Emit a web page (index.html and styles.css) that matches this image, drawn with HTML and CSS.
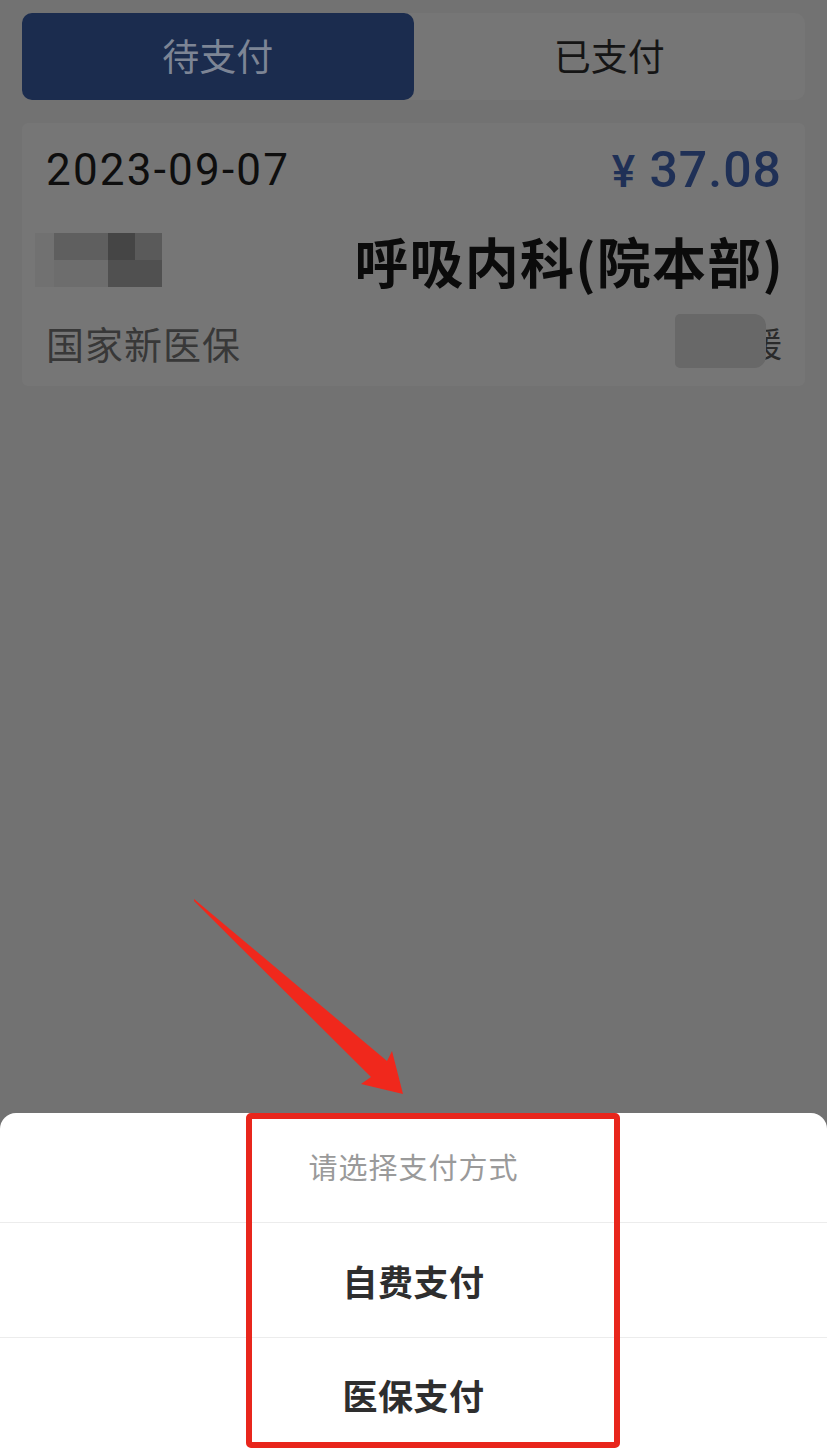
FILE: index.html
```html
<!DOCTYPE html>
<html lang="zh-CN">
<head>
<meta charset="utf-8">
<title>待支付</title>
<link rel="stylesheet" href="styles.css">
</head>
<body>
<div class="page">
  <div class="tabs">
    <div class="tab active">待支付</div>
    <div class="tab">已支付</div>
  </div>

  <div class="card">
    <div class="row row-date">
      <span class="date">2023-09-07</span>
      <span class="price"><span class="yen">¥</span> 37.08</span>
    </div>
    <div class="row row-dept">
      <div class="mosaic">
        <span class="m m1"></span><span class="m m2"></span><span class="m m3"></span>
        <span class="m m4"></span><span class="m m5"></span><span class="m m6"></span>
      </div>
      <span class="dept">呼吸内科(院本部)</span>
    </div>
    <div class="row row-type">
      <span class="type">国家新医保</span>
      <span class="tag"><span class="tag-blur"></span><span class="tag-text">援</span></span>
    </div>
  </div>
</div>

<svg class="arrow" width="827" height="1452" viewBox="0 0 827 1452" aria-hidden="true">
  <polygon points="194,899 387,1061 392,1051 403,1094 361,1084 371,1077 194,901" fill="#f0281c"/>
</svg>

<div class="sheet">
  <div class="sheet-row sheet-title">请选择支付方式</div>
  <div class="sheet-row sheet-option">自费支付</div>
  <div class="sheet-row sheet-option">医保支付</div>
  <div class="highlight"></div>
</div>
</body>
</html>
```

FILE: styles.css
```css
* { box-sizing: border-box; }

html, body {
  margin: 0;
  padding: 0;
}

body {
  width: 827px;
  height: 1452px;
  overflow: hidden;
  background: #727272;
  font-family: "Liberation Sans", "Noto Sans CJK SC", sans-serif;
  position: relative;
}

.page {
  padding: 13px 22px 0 22px;
}

.tabs {
  display: flex;
  height: 87px;
  background: #767676;
  border-radius: 10px;
}

.tab {
  flex: 1;
  display: flex;
  align-items: center;
  justify-content: center;
  font-size: 37px;
  color: #151515;
  font-family: "Noto Sans CJK SC", sans-serif;
  padding-bottom: 4px;
}

.tab.active {
  background: #1b2c4e;
  color: #7d8595;
  border-radius: 10px;
}

.card {
  margin-top: 23px;
  height: 263px;
  background: #767676;
  border-radius: 6px;
  padding: 22px 23px 0 24px;
  display: flex;
  flex-direction: column;
}

.row {
  display: flex;
  align-items: center;
  justify-content: space-between;
}

.row-date {
  height: 50px;
}

.date {
  font-family: Roboto, "Liberation Sans", sans-serif;
  font-weight: 400;
  font-size: 44px;
  letter-spacing: 2.2px;
  color: #0e0e0e;
}

.price {
  font-family: Roboto, "Liberation Sans", sans-serif;
  font-weight: 500;
  font-size: 50px;
  color: #1f3056;
  letter-spacing: 1px;
}

.yen {
  font-size: 44px;
}

.row-dept {
  height: 60px;
  margin-top: 35px;
}

.mosaic {
  display: grid;
  grid-template-columns: 19px 54px 27px 27px;
  grid-template-rows: 27px 27px;
  margin-left: -11px;
}

.m { display: block; }
.m1 { grid-column: 2; grid-row: 1; background: #5f5f5f; }
.m2 { grid-column: 3; grid-row: 1; background: #454545; }
.m3 { grid-column: 4; grid-row: 1; background: #5a5a5a; }
.m4 { grid-column: 1; grid-row: 1 / span 2; background: #717171; }
.m5 { grid-column: 2; grid-row: 2; background: #6d6d6d; }
.m6 { grid-column: 3 / span 2; grid-row: 2; background: #505050; }

.dept {
  font-family: "Noto Sans CJK SC", sans-serif;
  font-weight: 700;
  font-size: 54px;
  letter-spacing: 1.2px;
  color: #0b0b0b;
  margin-right: -2px;
}

.row-type {
  height: 54px;
  margin-top: 25px;
}

.type {
  font-family: "Noto Sans CJK SC", sans-serif;
  font-size: 38px;
  letter-spacing: 1px;
  color: #383838;
}

.tag {
  position: relative;
  display: inline-flex;
  align-items: center;
}

.tag-text {
  font-family: "Noto Sans CJK SC", sans-serif;
  font-size: 34px;
  color: #2a2a2a;
}

.tag-blur {
  position: absolute;
  right: 16px;
  top: -4px;
  width: 91px;
  height: 54px;
  background: #686868;
  border-radius: 5px 12px 12px 5px;
}

.arrow {
  position: absolute;
  left: 0;
  top: 0;
}

.sheet {
  position: absolute;
  left: 0;
  bottom: 0;
  width: 827px;
  height: 339px;
  background: #ffffff;
  border-radius: 16px 16px 0 0;
  font-family: "Noto Sans CJK SC", sans-serif;
}

.sheet-row {
  display: flex;
  align-items: center;
  justify-content: center;
}

.sheet-title {
  height: 110px;
  font-size: 29px;
  color: #9a9a9a;
  border-bottom: 1px solid #ececec;
  letter-spacing: 1px;
  padding-bottom: 4px;
}

.sheet-option {
  height: 114px;
  font-size: 35px;
  font-weight: 700;
  color: #2e2e2e;
  letter-spacing: 0.5px;
}

.sheet-option + .sheet-option {
  border-top: 1px solid #ececec;
}

.highlight {
  position: absolute;
  left: 246px;
  top: 0;
  width: 374px;
  height: 335px;
  border: 6px solid #e8261c;
  border-radius: 5px;
}
```
